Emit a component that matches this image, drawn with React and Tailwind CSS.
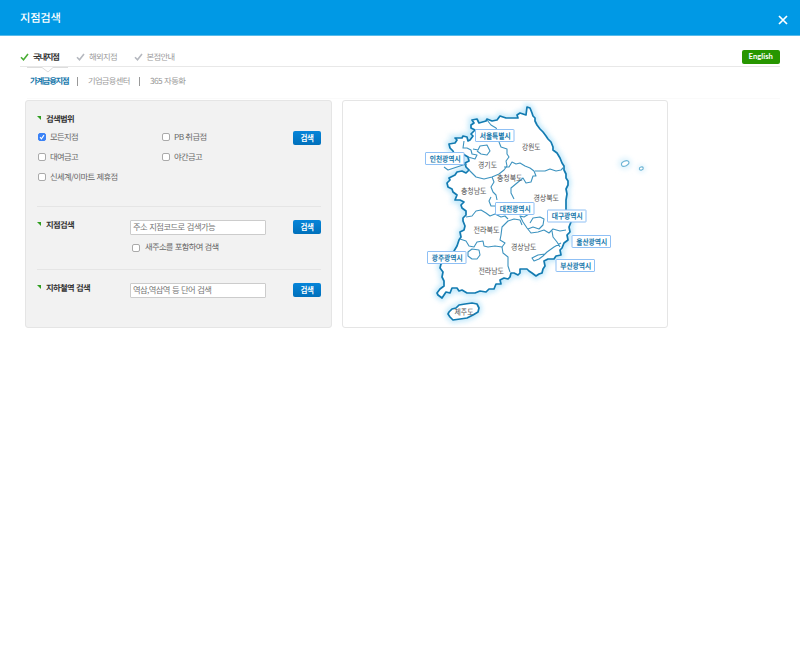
import React from "react";

const COAST =
  "M530 108L532 113L533 116L535 118L535 121L537 125L540 129L543 132L546 136L548 139L551 142L553 147L553 150L557 153L560 158L562 163L564 166L564 170L566 174L566 178L568 181L568 185L566 189L567 194L566 200L566 210L569 214L571 222L569 227L570 232L567 235L568 240L564 243L562 248L560 250L561 255L556 256L554 259L548 259L544 261L545 266L543 269L542 273L539 274L536 276L532 273L529 271L527 269L520 269L520 273L518 275L514 273L511 273L510 277L508 279L504 278L500 280L501 284L496 284L494 289L489 289L486 292L480 291L475 293L471 293L467 293L462 290L459 291L457 288L452 288L450 293L446 292L442 298L438 295L437 293L440 289L444 286L444 281L442 277L443 272L440 268L441 264L450 256L454 251L457 246L459 240L461 237L460 232L464 230L465 226L463 221L463 218L466 215L466 211L462 208L461 205L464 202L460 200L455 200L457 195L453 192L452 189L448 187L447 183L450 180L449 178L455 175L457 172L462 171L466 173L469 170L466 167L465 163L469 161L468 157L463 154L459 153L455 156L453 151L450 148L449 144L455 143L457 140L455 138L462 138L463 136L467 137L468 141L470 140L473 136L471 134L475 130L471 128L471 125L474 123L472 120L477 119L479 123L486 121L487 119L492 121L497 120L500 116L506 118L518 118L517 115L520 113L523 114L526 115L527 107Z";

const BORDERS = [
  "M487 120L491 125L496 128L499 133M499 142L501 147L507 149L507 154L509 157L506 161L507 166L504 170L499 174L492 177L484 179L476 177L472 173L469 170",
  "M504 167L509 167L512 162L516 164L520 163L525 166L530 168L534 171L536 176L533 176L531 182L526 183L523 178L517 183L511 188L511 193L514 199",
  "M492 177L494 182L491 187L493 192L496 195L497 200M535 171L545 171L550 169L556 171L561 170L564 167",
  "M464 141L463 148L467 148L471 150L472 154L477 155L475 159L468 157M473 149L478 150L480 146L487 145L490 151L487 155L481 154L477 151",
  "M444 167L448 170L454 168L463 165L467 164",
  "M491 197L489 201L491 206L495 206L499 209",
  "M466 217L472 216L476 211L481 210L486 213L490 216L495 214L501 217L505 216L508 219",
  "M496 206L502 213M529 214L524 217L520 216L523 222L527 228L531 233L538 232L544 230L549 233L553 229L560 231L566 230",
  "M460 239L466 241L469 246L474 247L477 242L483 241L484 246L488 247L495 246L502 247L505 243L500 240L501 235L502 227L508 221L514 219L520 220L522 225",
  "M502 247L503 253L508 257L508 266L510 272",
  "M468 252L472 249L479 250L480 255L477 259L472 259L468 256Z",
  "M530 223L533 218L540 217L544 219L543 225L539 229L533 227L528 229",
  "M552 231L553 237L557 242L560 247M561 243L554 247L547 252L543 256L539 259L534 261L532 258L538 255L545 254",
];

const PROVINCES = [
  { t: "강원도", x: 522, y: 150, w: 18.5 },
  { t: "경기도", x: 478, y: 167.5, w: 19 },
  { t: "충청북도", x: 497, y: 180.5, w: 25.5 },
  { t: "충청남도", x: 461, y: 194, w: 25.5 },
  { t: "경상북도", x: 533.5, y: 201, w: 25.5 },
  { t: "전라북도", x: 473.5, y: 232.5, w: 26 },
  { t: "경상남도", x: 511, y: 250, w: 25.5 },
  { t: "전라남도", x: 478.5, y: 273.5, w: 25.5 },
  { t: "제주도", x: 454.5, y: 314.5, w: 19 },
];

const CITIES = [
  { t: "서울특별시", x: 475.5, y: 129.5 },
  { t: "인천광역시", x: 425.5, y: 152.5 },
  { t: "대전광역시", x: 495.5, y: 202.5 },
  { t: "대구광역시", x: 547.5, y: 210 },
  { t: "울산광역시", x: 572, y: 235.5 },
  { t: "광주광역시", x: 427.5, y: 251.5 },
  { t: "부산광역시", x: 556, y: 259.5 },
];

const JEJU =
  "M449 312L452 309L456 308L459 305L465 304L472 303L477 304L479 308L478 312L473 315L467 318L460 319L453 320L450 317L448 314Z";

function KoreaMap() {
  return (
    <svg
      viewBox="343 101 324 226"
      className="h-[226px] w-[324px]"
      fontFamily="'Noto Sans CJK KR', sans-serif"
    >
      <defs>
        <filter id="glow" x="-20%" y="-20%" width="140%" height="140%">
          <feGaussianBlur stdDeviation="2.8" />
        </filter>
      </defs>
      <g filter="url(#glow)" fill="none" stroke="#8fd6f7" strokeWidth="6" opacity="0.55">
        <path d={COAST} />
        <path d={JEJU} />
      </g>
      <g filter="url(#glow)" fill="#dff3fc">
        <ellipse cx="625" cy="163.5" rx="7" ry="6" />
        <ellipse cx="641.5" cy="168.5" rx="4" ry="4" />
      </g>
      <g fill="#fff" stroke="#137bb1" strokeWidth="1.7" strokeLinejoin="round">
        <path d={COAST} />
        <path d={JEJU} />
      </g>
      <g fill="none" stroke="#3d93bf" strokeWidth="1.1" strokeLinejoin="round">
        {BORDERS.map((d) => (
          <path key={d} d={d} />
        ))}
      </g>
      <g fill="#fff" stroke="#6db4d4" strokeWidth="1.1">
        <ellipse cx="625.2" cy="163.5" rx="3.9" ry="2.4" transform="rotate(-25 625.2 163.5)" />
        <ellipse cx="641.3" cy="168.5" rx="2" ry="1.5" transform="rotate(-15 641.3 168.5)" />
      </g>
      <g fontSize="8.3" fill="#555">
        {PROVINCES.map((p) => (
          <text key={p.t} x={p.x} y={p.y} textLength={p.w} lengthAdjust="spacingAndGlyphs">
            {p.t}
          </text>
        ))}
      </g>
      {CITIES.map((c) => (
        <g key={c.t}>
          <rect x={c.x} y={c.y} width="38.5" height="12" rx="0.5" fill="#fff" stroke="#8fc0f5" />
          <text
            x={c.x + 4.2}
            y={c.y + 9}
            textLength="31"
            lengthAdjust="spacingAndGlyphs"
            fontSize="8"
            fontWeight="700"
            fill="#1778ab"
          >
            {c.t}
          </text>
        </g>
      ))}
    </svg>
  );
}

function Tick({ color }) {
  return (
    <svg viewBox="0 0 9 8" className="mr-[4px] h-[8px] w-[9px]" fill="none">
      <path d="M1 4.2L3.5 6.7L8 1" stroke={color} strokeWidth="1.6" />
    </svg>
  );
}

function Check({ checked, className = "" }) {
  return (
    <span
      className={`block h-[8px] w-[8px] shrink-0 rounded-[2px] border ${
        checked ? "border-[#3b82f6] bg-[#3b82f6]" : "border-[#aaa] bg-white"
      } ${className}`}
    >
      {checked && (
        <svg viewBox="0 0 6 6" className="block h-[6px] w-[6px]" fill="none">
          <path d="M1 3.2L2.4 4.8L5 1.1" stroke="#fff" strokeWidth="1.1" />
        </svg>
      )}
    </span>
  );
}

function Option({ label, checked, tracking }) {
  return (
    <label className="flex h-[20.2px] items-center">
      <Check checked={checked} />
      <span className={`ml-[4px] whitespace-nowrap ${tracking}`}>{label}</span>
    </label>
  );
}

function Heading({ children, tracking = "tracking-[-0.65px]" }) {
  return (
    <h2 className={`flex h-[12px] items-center font-bold text-[#333] ${tracking}`}>
      <svg viewBox="0 0 4 4" className="mr-[5px] mb-[2px] h-[4px] w-[4px]">
        <path d="M0 0H4V4Z" fill="#2f9e1f" />
      </svg>
      {children}
    </h2>
  );
}

function SearchButton() {
  return (
    <button className="flex h-[14px] w-[28px] items-center justify-center rounded-[2px] bg-gradient-to-b from-[#0785d9] to-[#0070bb] text-[7.5px] font-bold tracking-[-0.5px] text-white">
      검색
    </button>
  );
}

function Field({ placeholder, tracking }) {
  return (
    <input
      placeholder={placeholder}
      className={`block h-[15px] w-[136px] rounded-[1px] border border-[#ccc] bg-white px-[2px] pb-[3px] text-[8.3px] text-[#666] placeholder:text-[#757575] ${tracking}`}
    />
  );
}

export default function App() {
  return (
    <div className="h-[646px] w-[800px] overflow-hidden bg-white font-['Noto_Sans_CJK_KR',sans-serif] text-[8.3px] leading-[12px] text-[#666] [text-rendering:geometricPrecision]">
      <header className="flex h-[36px] items-center justify-between border-b border-[#58bbea] bg-[#0099e5] pr-[12px] pl-[20px] text-white">
        <h1 className="mt-px text-[11.3px] font-medium tracking-[-0.25px]">지점검색</h1>
        <svg viewBox="0 0 10 10" className="mt-[4px] h-[10px] w-[10px]">
          <path d="M1 1L9 9M9 1L1 9" stroke="#fff" strokeWidth="1.7" />
        </svg>
      </header>

      <div className="ml-[20px] flex h-[31px] w-[760px] items-start justify-between border-b border-[#e8e8e8]">
        <nav className="flex pt-[15px] text-[#999]">
          <a className="flex w-[56px] items-center font-bold tracking-[-1.2px] text-[#333]">
            <Tick color="#4aad35" />
            국내지점
          </a>
          <a className="flex w-[57.5px] items-center tracking-[-0.6px]">
            <Tick color="#b5b8bf" />
            해외지점
          </a>
          <a className="flex items-center tracking-[-0.6px]">
            <Tick color="#b5b8bf" />
            본점안내
          </a>
        </nav>
        <button className="mt-[13.5px] flex h-[14px] w-[38.5px] items-center justify-center rounded-[2px] bg-[#279600] pb-px font-[Lato] text-[7.7px] font-bold text-white">
          English
        </button>
      </div>

      <div className="ml-[27px] h-[32px] w-[753px] border-b border-[#fafafa]">
        <svg viewBox="0 0 41 6" className="block h-[6px] w-[41px]" fill="none">
          <path d="M0 .5H15L21 5L26 .5H41" stroke="#ddd" />
        </svg>
        <nav className="flex items-center pt-[2px] pl-[3px] text-[#999]">
          <a className="w-[47px] font-bold tracking-[-1.25px] whitespace-nowrap text-[#1778ab]">
            가계금융지점
          </a>
          <span className="mt-px h-[9px] w-px bg-[#999]" />
          <a className="w-[51px] pl-[10px] tracking-[-0.7px] whitespace-nowrap">기업금융센터</a>
          <span className="mt-px ml-[10px] h-[9px] w-px bg-[#999]" />
          <a className="pl-[10px] tracking-[-0.55px] whitespace-nowrap [word-spacing:0.6px]">
            365 자동화
          </a>
        </nav>
      </div>

      <main className="ml-[25px] flex gap-[10px] pt-px">
        <form className="h-[228px] w-[307px] rounded-[3px] border border-[#e5e5e5] bg-[#f2f2f2] pr-[10px] pl-[11px]">
          <section className="flex h-[106px] items-start justify-between border-b border-[#e5e5e5] pt-[12px]">
            <div>
              <Heading>검색범위</Heading>
              <div className="mt-[2px] ml-[1px] grid grid-cols-[124px_auto]">
                <Option label="모든지점" checked tracking="tracking-[-0.6px]" />
                <Option label="PB 취급점" tracking="tracking-[-0.6px] [word-spacing:0.6px]" />
                <Option label="대여금고" tracking="tracking-[-0.6px]" />
                <Option label="야간금고" tracking="tracking-[-0.6px]" />
                <Option
                  label="신세계/이마트 제휴점"
                  tracking="tracking-[-0.65px] [word-spacing:0.8px]"
                />
              </div>
            </div>
            <div className="pt-[18px]">
              <SearchButton />
            </div>
          </section>

          <section className="flex h-[63px] items-start border-b border-[#e5e5e5] pt-[12px]">
            <div className="w-[93px]">
              <Heading>지점검색</Heading>
            </div>
            <div className="pt-px">
              <Field
                placeholder="주소 지점코드로 검색가능"
                tracking="tracking-[-0.55px] [word-spacing:0.8px]"
              />
              <label className="mt-[6px] flex items-center">
                <Check className="mt-[2px] ml-[2px]" />
                <span className="ml-[5px] tracking-[-0.68px] [word-spacing:0.8px]">
                  새주소를 포함하여 검색
                </span>
              </label>
            </div>
            <div className="ml-auto pt-px">
              <SearchButton />
            </div>
          </section>

          <section className="flex items-start pt-[12px]">
            <div className="w-[93px]">
              <Heading tracking="tracking-[-0.65px] [word-spacing:0.8px]">지하철역 검색</Heading>
            </div>
            <div className="pt-px">
              <Field
                placeholder="역삼,역삼역 등 단어 검색"
                tracking="tracking-[-0.6px] [word-spacing:0.8px]"
              />
            </div>
            <div className="ml-auto pt-px">
              <SearchButton />
            </div>
          </section>
        </form>

        <section className="h-[228px] w-[326px] rounded-[3px] border border-[#e5e5e5] bg-white">
          <KoreaMap />
        </section>
      </main>
    </div>
  );
}
